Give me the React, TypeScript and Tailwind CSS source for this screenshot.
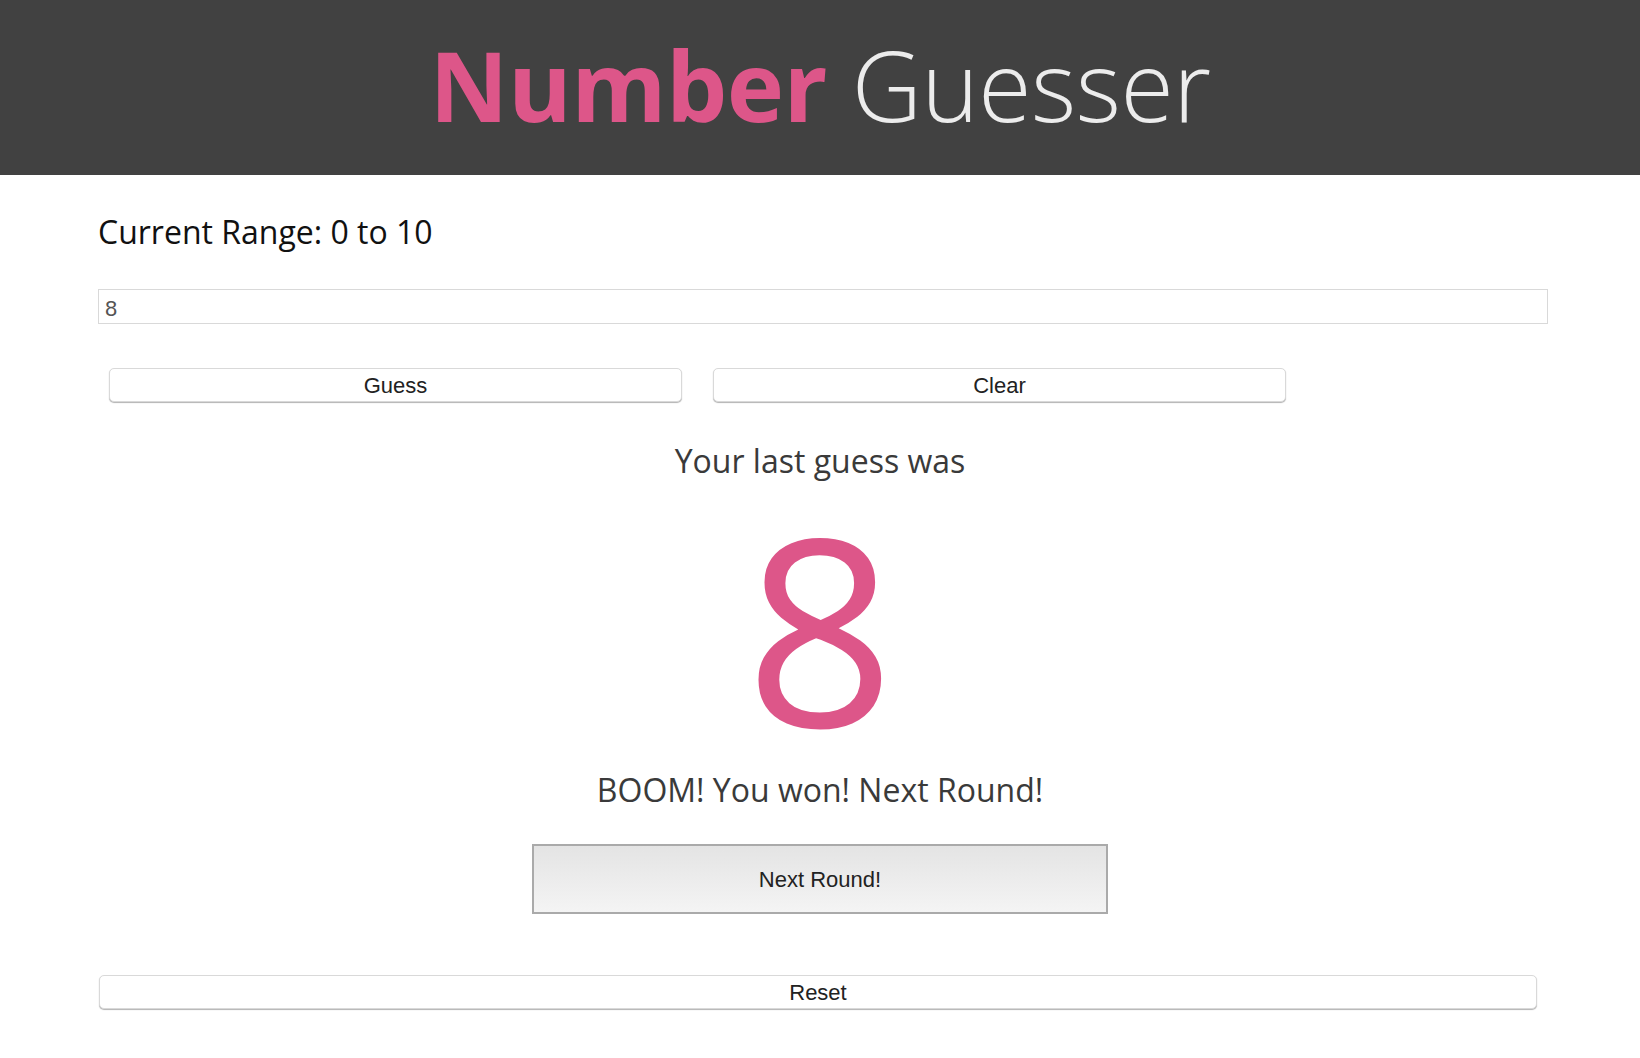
import React from "react";

const btnBase =
  "h-[34px] rounded-[5px] bg-white border border-[#d9d9d9] shadow-[0_1px_1px_rgba(0,0,0,0.3)] text-[22px] text-[#222] font-['Liberation_Sans',Arial,sans-serif] leading-none";

export default function App() {
  return (
    <div className="w-[1640px] min-h-[1058px] bg-white font-['Open_Sans',sans-serif]">
      <header className="h-[175px] bg-[#414141] flex items-center justify-center">
        <h1 className="text-[97px] leading-none pb-[6px] tracking-[-0.5px]">
          <span className="font-bold text-[#dd5689]">Number</span>{" "}
          <span className="font-light text-[#ececec]">Guesser</span>
        </h1>
      </header>
      <main className="pl-[98px]">
        <p className="pt-[37px] text-[32px] leading-[40px] text-[#111]">Current Range: 0 to 10</p>
        <input
          readOnly
          value="8"
          className="mt-[37px] block w-[1450px] h-[35px] border border-[#d9d9d9] pl-[6px] pt-[4px] text-[22px] text-[#555] font-['Liberation_Sans',Arial,sans-serif] outline-none"
        />
        <div className="mt-[44px] ml-[11px] flex gap-[31px]">
          <button className={`${btnBase} w-[573px] pt-[2px]`}>Guess</button>
          <button className={`${btnBase} w-[573px] pt-[2px]`}>Clear</button>
        </div>
      </main>
      <section className="flex flex-col items-center">
        <p className="mt-[37px] text-[32px] leading-[44px] text-[#3a3a3a]">Your last guess was</p>
        <p className="mt-[38px] text-[261px] leading-[210px] text-[#dd5689]">8</p>
        <p className="mt-[37px] text-[32px] leading-[44px] text-[#3a3a3a]">BOOM! You won! Next Round!</p>
        <button className="mt-[32px] w-[576px] h-[70px] border-2 border-[#aaaaaa] bg-gradient-to-b from-[#e4e4e4] to-[#f4f4f4] text-[22px] text-[#222] font-['Liberation_Sans',Arial,sans-serif]">
          Next Round!
        </button>
      </section>
      <div className="pl-[99px] mt-[61px]">
        <button className={`${btnBase} w-[1438px] pt-[2px]`}>Reset</button>
      </div>
    </div>
  );
}
